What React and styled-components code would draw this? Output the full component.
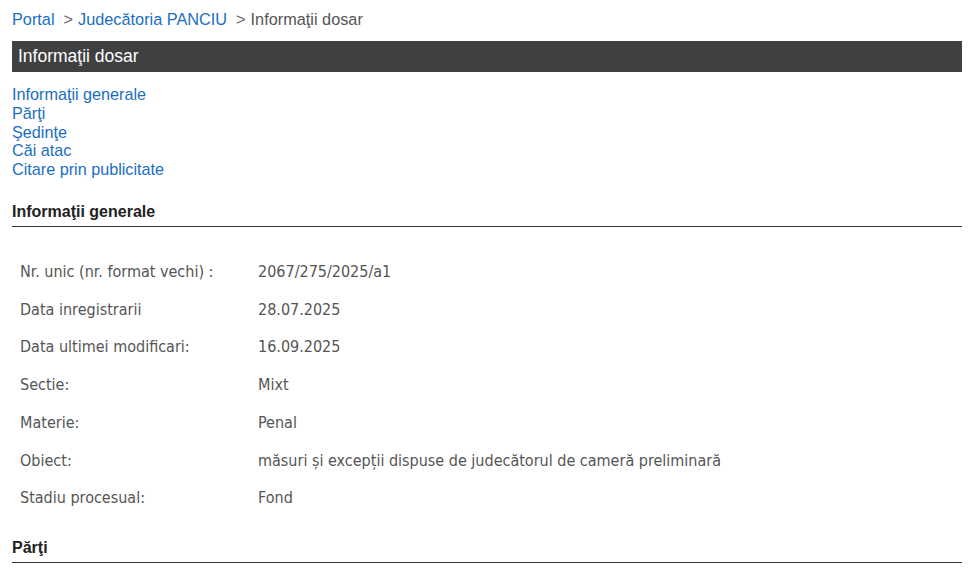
import React from "react";
import styled, { createGlobalStyle } from "styled-components";

const GlobalStyle = createGlobalStyle`
  html, body {
    margin: 0;
    padding: 0;
    background: #ffffff;
  }
  body {
    font-family: "Liberation Sans", Arial, sans-serif;
  }
`;

const Page = styled.div`
  padding: 9px 11px 0 12px;
  display: flex;
  flex-direction: column;
`;

const Breadcrumb = styled.div`
  display: flex;
  align-items: center;
  font-size: 16.3px;
  line-height: 20px;
  color: #555555;
`;

const Crumb = styled.a`
  color: #1a6ec4;
  text-decoration: none;
`;

const Sep = styled.span`
  margin: 0 5px 0 9px;
  color: #666666;
`;

const TitleBar = styled.div`
  margin-top: 12px;
  height: 31px;
  background: #404040;
  color: #ffffff;
  font-size: 17.5px;
  line-height: 31px;
  padding-left: 6px;
`;

const NavList = styled.ul`
  list-style: none;
  margin: 13px 0 0;
  padding: 0;
  display: flex;
  flex-direction: column;
`;

const NavItem = styled.li`
  font-size: 16.2px;
  line-height: 18.75px;
`;

const NavLink = styled.a`
  color: #1a6ec4;
  text-decoration: none;
`;

const SectionTitle = styled.div`
  margin-top: ${(p) => p.$top}px;
  font-size: 16px;
  font-weight: bold;
  color: #222222;
  padding-bottom: 5px;
  border-bottom: 1px solid #333333;
  line-height: 18px;
`;

const InfoTable = styled.div`
  margin-top: 26px;
  display: grid;
  grid-template-columns: 238px 1fr;
  padding-left: 8px;
  color: #555555;
`;

const Cell = styled.div`
  height: 37.7px;
  display: flex;
  align-items: center;
  font-family: "DejaVu Sans Condensed", "DejaVu Sans", sans-serif;
  font-size: 16px;
`;

const rows = [
  ["Nr. unic (nr. format vechi) :", "2067/275/2025/a1"],
  ["Data inregistrarii", "28.07.2025"],
  ["Data ultimei modificari:", "16.09.2025"],
  ["Sectie:", "Mixt"],
  ["Materie:", "Penal"],
  ["Obiect:", "măsuri și excepții dispuse de judecătorul de cameră preliminară"],
  ["Stadiu procesual:", "Fond"],
];

const navItems = [
  "Informaţii generale",
  "Părţi",
  "Şedinţe",
  "Căi atac",
  "Citare prin publicitate",
];

export default function App() {
  return (
    <Page>
      <GlobalStyle />
      <Breadcrumb>
        <Crumb href="#">Portal</Crumb>
        <Sep>&gt;</Sep>
        <Crumb href="#">Judecătoria PANCIU</Crumb>
        <Sep>&gt;</Sep>
        <span>Informaţii dosar</span>
      </Breadcrumb>

      <TitleBar>Informaţii dosar</TitleBar>

      <NavList>
        {navItems.map((item) => (
          <NavItem key={item}>
            <NavLink href="#">{item}</NavLink>
          </NavItem>
        ))}
      </NavList>

      <SectionTitle $top={24}>Informaţii generale</SectionTitle>

      <InfoTable>
        {rows.map(([label, value]) => (
          <React.Fragment key={label}>
            <Cell>{label}</Cell>
            <Cell>{value}</Cell>
          </React.Fragment>
        ))}
      </InfoTable>

      <SectionTitle $top={22}>Părţi</SectionTitle>
    </Page>
  );
}
